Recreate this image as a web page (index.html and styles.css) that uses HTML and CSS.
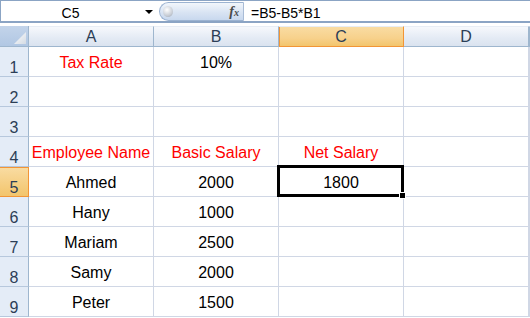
FILE: index.html
```html
<!DOCTYPE html>
<html lang="en">
<head>
  <title>Net Salary</title>
  <link rel="stylesheet" href="styles.css">
</head>
<body>

<div class="formula-bar">
  <div class="name-box">
    <span class="name-text">C5</span>
    <span class="arrow"></span>
  </div>
  <div class="fx-pill">
    <span class="knob"></span>
    <span class="fx">f<span class="fx-x">x</span></span>
  </div>
  <div class="formula">=B5-B5*B1</div>
</div>

<div class="sheet">
  <div class="corner"><span class="corner-tri"></span></div>
  <div class="col-head">A</div>
  <div class="col-head">B</div>
  <div class="col-head active">C</div>
  <div class="col-head">D</div>
  <div class="col-head"></div>

  <div class="row-head">1</div>
  <div class="cell red">Tax Rate</div>
  <div class="cell">10%</div>
  <div class="cell"></div>
  <div class="cell"></div>
  <div class="cell"></div>

  <div class="row-head">2</div>
  <div class="cell"></div>
  <div class="cell"></div>
  <div class="cell"></div>
  <div class="cell"></div>
  <div class="cell"></div>

  <div class="row-head">3</div>
  <div class="cell"></div>
  <div class="cell"></div>
  <div class="cell"></div>
  <div class="cell"></div>
  <div class="cell"></div>

  <div class="row-head">4</div>
  <div class="cell red">Employee Name</div>
  <div class="cell red">Basic Salary</div>
  <div class="cell red">Net Salary</div>
  <div class="cell"></div>
  <div class="cell"></div>

  <div class="row-head active">5</div>
  <div class="cell">Ahmed</div>
  <div class="cell">2000</div>
  <div class="cell selected">1800<span class="handle"></span></div>
  <div class="cell"></div>
  <div class="cell"></div>

  <div class="row-head">6</div>
  <div class="cell">Hany</div>
  <div class="cell">1000</div>
  <div class="cell"></div>
  <div class="cell"></div>
  <div class="cell"></div>

  <div class="row-head">7</div>
  <div class="cell">Mariam</div>
  <div class="cell">2500</div>
  <div class="cell"></div>
  <div class="cell"></div>
  <div class="cell"></div>

  <div class="row-head">8</div>
  <div class="cell">Samy</div>
  <div class="cell">2000</div>
  <div class="cell"></div>
  <div class="cell"></div>
  <div class="cell"></div>

  <div class="row-head">9</div>
  <div class="cell">Peter</div>
  <div class="cell">1500</div>
  <div class="cell"></div>
  <div class="cell"></div>
  <div class="cell"></div>
</div>

</body>
</html>
```

FILE: styles.css
```css
body {
  margin: 0;
  background-color: #fff;
  font-family: "Liberation Sans", Arial, sans-serif;
  overflow: hidden;
}

/* formula bar */
.formula-bar {
  display: flex;
  height: 23px;
  box-sizing: border-box;
  border-top: 1px solid #8ba4c4;
  border-left: 1px solid #8ba4c4;
  border-bottom: 2px solid #8ba4c4;
  margin-bottom: 3px;
  font-size: 14px;
  color: #000;
}
.name-box {
  width: 158px;
  display: flex;
  align-items: center;
  padding-top: 3px;
  box-sizing: border-box;
}
.name-text {
  flex: 1;
  text-align: center;
  padding-right: 5px;
}
.arrow {
  width: 0;
  height: 0;
  border-left: 4px solid transparent;
  border-right: 4px solid transparent;
  border-top: 4px solid #000;
  margin-right: 6px;
  margin-top: -2px;
}
.fx-pill {
  width: 85px;
  margin-top: 1px;
  box-sizing: border-box;
  border: 1px solid #9cb3d1;
  border-right: 1px solid #a9bcd6;
  border-radius: 10px 0 0 10px;
  background: linear-gradient(#f2f6fb, #d9e4f3 55%, #c8d8ee);
  display: flex;
  align-items: center;
  justify-content: space-between;
  padding: 0 4px 0 3px;
}
.knob {
  width: 10px;
  height: 11px;
  border-radius: 50%;
  background: radial-gradient(circle at 40% 35%, #fff, #c9ced6 60%, #9aa3ae);
}
.fx {
  font-family: "Liberation Serif", serif;
  font-style: italic;
  font-weight: bold;
  font-size: 14px;
  color: #4a4a4a;
  padding-top: 1px;
}
.fx-x {
  font-size: 10px;
}
.formula {
  flex: 1;
  padding-left: 7px;
  padding-top: 3px;
  display: flex;
  align-items: center;
}

/* sheet */
.sheet {
  display: grid;
  grid-template-columns: 29px repeat(4, 125px) 1fr;
  grid-template-rows: 21px;
  grid-auto-rows: 30px;
  font-size: 16px;
}
.corner {
  background: linear-gradient(#c3d4ea, #b1c7e3);
  border-right: 1px solid #9eb6ce;
  border-bottom: 1px solid #9eb6ce;
  display: flex;
  justify-content: flex-end;
  align-items: flex-end;
  padding: 0 2px 2px 0;
}
.corner-tri {
  width: 12px;
  height: 12px;
  background: linear-gradient(135deg, #fdfdfd, #d4dbe4);
  clip-path: polygon(100% 0, 100% 100%, 0 100%);
}
.col-head {
  background: linear-gradient(#f6f8fc, #e3eaf4 60%, #dae3ef);
  border-right: 1px solid #9eb6ce;
  border-bottom: 1px solid #9eb6ce;
  border-top: 1px solid #e7edf5;
  display: flex;
  align-items: center;
  justify-content: center;
  color: #2c3e56;
  box-sizing: border-box;
}
.col-head.active {
  background: linear-gradient(#f9dca3, #f7d18b 60%, #f3c56c);
  border-right-color: #f29536;
  border-bottom-color: #f29536;
  box-shadow: inset 1px 0 0 #f29536;
}
.row-head {
  background-color: #e4ecf7;
  border-right: 1px solid #9eb6ce;
  border-bottom: 1px solid #b7c8dd;
  display: flex;
  align-items: flex-end;
  justify-content: center;
  color: #2c3e56;
  line-height: 17px;
}
.row-head.active {
  background: linear-gradient(#f9dca3, #f3c56c);
  border-right-color: #f29536;
  border-bottom-color: #f29536;
  box-shadow: inset 0 1px 0 #f29536;
}
.cell {
  border-right: 1px solid #d0d7e5;
  border-bottom: 1px solid #d0d7e5;
  display: flex;
  align-items: flex-end;
  justify-content: center;
  padding-bottom: 4px;
  line-height: 18px;
  color: #000;
}
.cell.red {
  color: #ff0000;
}
.cell.selected {
  position: relative;
}
.cell.selected::after {
  content: "";
  position: absolute;
  top: -2px;
  left: -2px;
  right: -1px;
  bottom: -1px;
  border: 3px solid #000;
}
.handle {
  position: absolute;
  right: -3px;
  bottom: -3px;
  width: 5px;
  height: 5px;
  background-color: #000;
  border: 1px solid #fff;
  z-index: 1;
}
```
